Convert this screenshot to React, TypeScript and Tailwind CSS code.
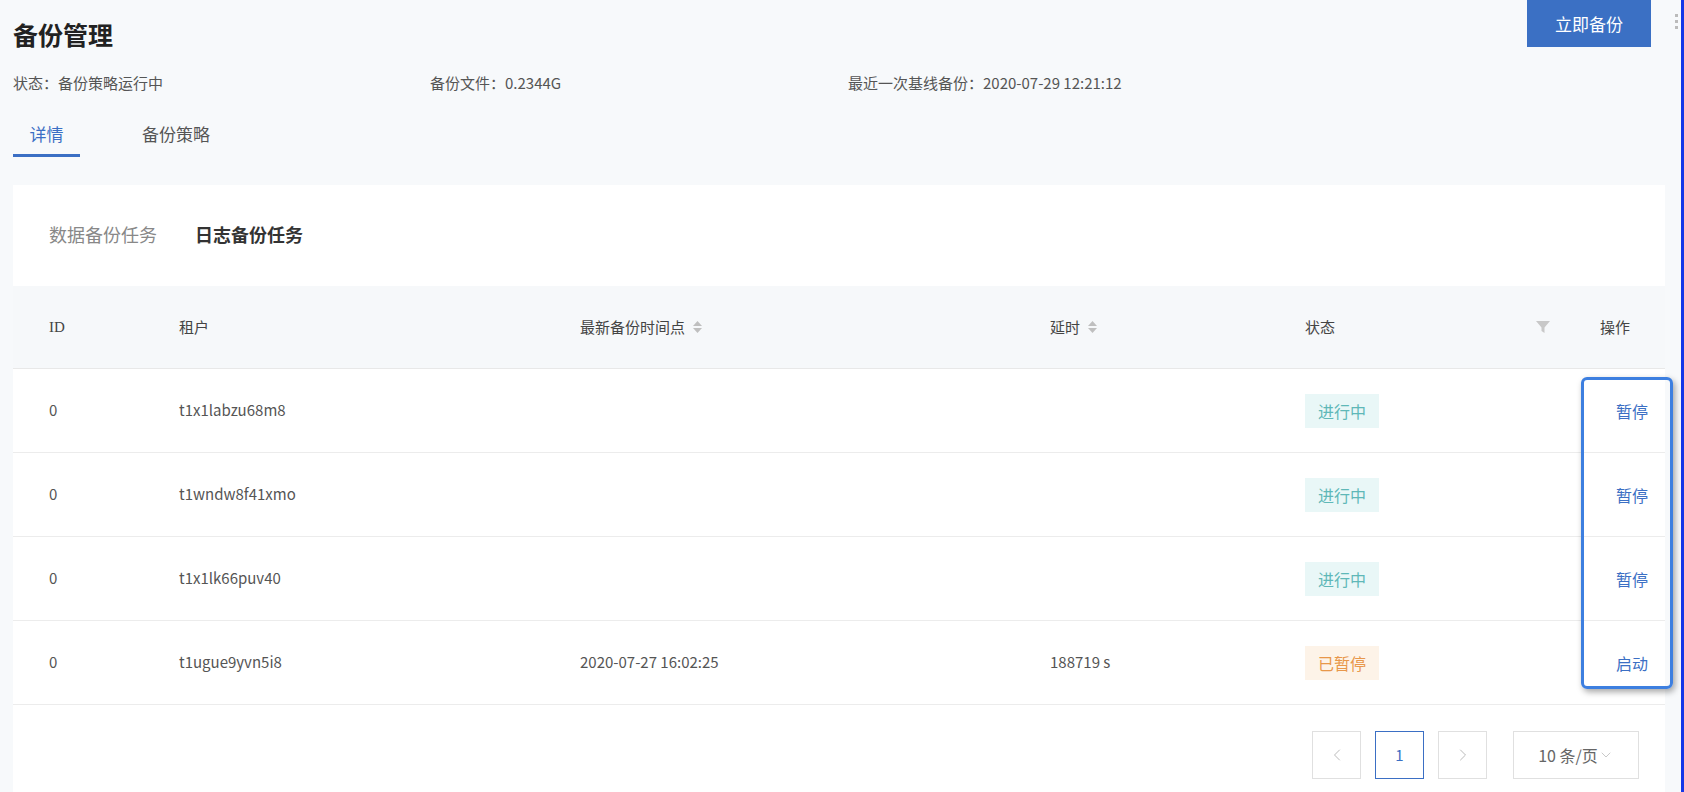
import { ChevronLeft, ChevronRight, ChevronDown } from "lucide-react"

const rows = [
  { id: 0, tenant: "t1x1labzu68m8", time: "", delay: "", status: "run" },
  { id: 0, tenant: "t1wndw8f41xmo", time: "", delay: "", status: "run" },
  { id: 0, tenant: "t1x1lk66puv40", time: "", delay: "", status: "run" },
  { id: 0, tenant: "t1ugue9yvn5i8", time: "2020-07-27 16:02:25", delay: "188719 s", status: "pause" },
]

function Sorter() {
  return (
    <span className="ml-2 inline-flex flex-col gap-[2px] text-[#bfbfbf]">
      <svg width="9" height="5" viewBox="0 0 9 5"><path d="M0 5 L4.5 0 L9 5Z" fill="currentColor" /></svg>
      <svg width="9" height="5" viewBox="0 0 9 5"><path d="M0 0 L4.5 5 L9 0Z" fill="currentColor" /></svg>
    </span>
  )
}

export default function App() {
  return (
    <div
      className="relative w-[1684px] h-[792px] overflow-hidden bg-[#f7f9fb] text-[#555]"
      style={{ fontFamily: '"Noto Sans CJK SC", "Liberation Sans", sans-serif' }}
    >
      {/* Header */}
      <div className="flex justify-between pl-[13px] pr-[33px]">
        <div>
          <h1 className="pt-[16px] text-[25px] font-bold text-[#222] leading-[36px]">备份管理</h1>
          <div className="mt-[20px] flex text-[15px] text-[#555]">
            <span className="w-[417px]">状态：备份策略运行中</span>
            <span className="w-[418px]">备份文件：0.2344G</span>
            <span>最近一次基线备份：2020-07-29 12:21:12</span>
          </div>
          <div className="mt-[26px] flex text-[17px]">
            <div className="w-[67px] border-b-[3px] border-[#3b6fc4] pb-[8px] text-center text-[#3b6fc4]">详情</div>
            <div className="ml-[62px] text-[#555]">备份策略</div>
          </div>
        </div>
        <button className="h-[47px] w-[124px] bg-[#3b70c4] text-[17px] text-white">立即备份</button>
      </div>
      <div className="absolute right-[6px] top-[14px] flex flex-col gap-[3px]">
        <span className="h-[3px] w-[3px] bg-[#bbb]" />
        <span className="h-[3px] w-[3px] bg-[#bbb]" />
        <span className="h-[3px] w-[3px] bg-[#bbb]" />
      </div>
      <div className="absolute right-0 top-0 h-full w-[3px] bg-[#1436e8]" />

      {/* Card */}
      <div className="relative ml-[13px] mt-[28px] w-[1652px] bg-white">
        <div className="flex gap-[38px] px-[36px] pt-[36px] pb-[38px] text-[18px]">
          <span className="text-[#888]">数据备份任务</span>
          <span className="font-bold text-[#333]">日志备份任务</span>
        </div>
        <div className="flex h-[83px] items-center bg-[#f6f8fa] text-[15px] text-[#444] border-b border-[#e8e8e8]">
          <div className="w-[166px] pl-[36px]" style={{ fontFamily: '"Liberation Serif", serif' }}>ID</div>
          <div className="w-[401px]">租户</div>
          <div className="flex w-[470px] items-center">最新备份时间点<Sorter /></div>
          <div className="flex w-[255px] items-center">延时<Sorter /></div>
          <div className="flex w-[295px] items-center justify-between pr-[50px]">
            <span>状态</span>
            <svg width="14" height="12" viewBox="0 0 14 12"><path d="M0 0h14L8.5 6.5V12L5.5 10V6.5Z" fill="#c8c8c8" /></svg>
          </div>
          <div>操作</div>
        </div>
        {rows.map((r, i) => (
          <div key={i} className="flex h-[84px] items-center border-b border-[#ececec] text-[15px] text-[#555]">
            <div className="w-[166px] pl-[36px]">{r.id}</div>
            <div className="w-[401px]">{r.tenant}</div>
            <div className="w-[470px]">{r.time}</div>
            <div className="w-[255px]">{r.delay}</div>
            <div className="w-[311px]">
              {r.status === "run" ? (
                <span className="inline-block bg-[#e9f7f7] px-[13px] py-[5px] text-[16px] text-[#5fb8b8]">进行中</span>
              ) : (
                <span className="inline-block bg-[#fdf3e8] px-[13px] py-[5px] text-[16px] text-[#e8974a]">已暂停</span>
              )}
            </div>
            <div className="text-[16px] text-[#3b6fc4]">{r.status === "run" ? "暂停" : "启动"}</div>
          </div>
        ))}
        <div className="absolute left-[1568px] top-[192px] h-[312px] w-[92px] rounded-[6px] border-[3px] border-[#3d7fe0] shadow-[2px_3px_6px_rgba(0,0,0,0.35)]" />

        <div className="flex justify-end gap-[14px] pr-[26px] pt-[26px] pb-[20px] text-[15px]">
          <div className="flex h-[48px] w-[49px] items-center justify-center border border-[#e0e0e0] text-[#bbb]"><ChevronLeft size={20} strokeWidth={1.2} /></div>
          <div className="flex h-[48px] w-[49px] items-center justify-center border border-[#3b6fc4] text-[#3b6fc4]">1</div>
          <div className="flex h-[48px] w-[49px] items-center justify-center border border-[#e0e0e0] text-[#bbb]"><ChevronRight size={20} strokeWidth={1.2} /></div>
          <div className="ml-[12px] flex h-[48px] w-[126px] items-center justify-center border border-[#e0e0e0] text-[16px] text-[#666]">
            10 条/页<ChevronDown size={16} strokeWidth={1.2} className="text-[#bbb]" />
          </div>
        </div>
      </div>
    </div>
  )
}
